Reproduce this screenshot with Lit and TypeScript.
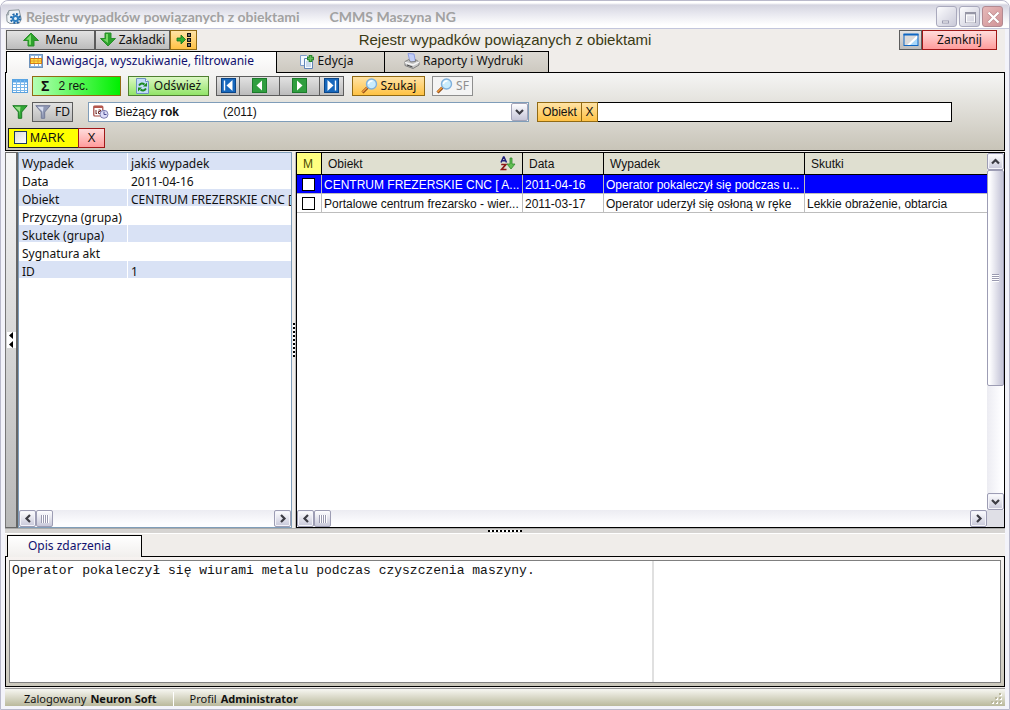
import { LitElement, html, css, svg, nothing } from "lit";
import { customElement, property, state } from "lit/decorators.js";
import { classMap } from "lit/directives/class-map.js";

const icon = (w: number, h: number, body: unknown) =>
  html`<svg width=${w} height=${h} viewBox="0 0 ${w} ${h}" aria-hidden="true">${body}</svg>`;

const icons = {
  app: icon(16, 16, svg`
    <path d="M3 1.500L13 .8l2.300 9.400-2 4L4 14.500 1 12.500.7 6z" fill="#eef3f6" stroke="#8b959b"/>
    <path d="M3 1.500L2.500 6 .7 6z" fill="#c3cbd0" stroke="#8b959b" stroke-width=".7"/>
    <circle cx="9.500" cy="9.500" r="3.600" fill="#2e7fc0"/>
    <circle cx="9.500" cy="9.500" r="4.500" fill="none" stroke="#1c66a8" stroke-width="2" stroke-dasharray="2 1.530"/>
    <circle cx="9.500" cy="9.500" r="1.500" fill="#e8f4fb"/>`),
  up: icon(16, 15, svg`
    <path d="M8 1L15.500 8.500H11V14H5V8.500H.5z" fill="#2da32d" stroke="#2a8f2a"/>
    <path d="M8 2.500L3 7.800h3v5h2z" fill="#7fdc6f"/>`),
  down: icon(16, 15, svg`
    <path d="M8 14L.5 6.500H5V1h6v5.500h4.500z" fill="#2da32d" stroke="#2a8f2a"/>
    <path d="M6 2h2v9L3 7.300h3z" fill="#7ad768"/>`),
  dock: icon(16, 15, svg`
    <path d="M1 6h4V3l4.500 4.500L5 12V9H1z" fill="#2fae2f" stroke="#12701a" stroke-width=".8"/>
    <g fill="#777" stroke="#111"><rect x="11.500" y="1.500" width="3" height="3"/><rect x="11.500" y="6.500" width="3" height="3"/><rect x="11.500" y="11.500" width="3" height="3"/></g>`),
  screen: icon(16, 14, svg`
    <path d="M1 1.500h14L4 13H1z" fill="#dadada"/><path d="M15 1.500V13H3z" fill="#fff"/><path d="M15 4.500V13H6z" fill="#a9d8fa"/>
    <rect x="1" y="1.500" width="14" height="11" fill="none" stroke="#0d67c4"/><path d="M.5 1.500h15" stroke="#0d67c4" stroke-width="2"/>`),
  form: icon(14, 14, svg`
    <rect x=".5" y=".5" width="13" height="13" fill="#8fb4dc" stroke="#6e92bb"/>
    <path d="M2 2h3v2H2zM6 2h3v2H6zM10 2h2v2h-2zM2 10h3v2H2zM6 10h3v2H6zM10 10h2v2h-2z" fill="#fff"/>
    <rect x="1.500" y="4.500" width="11" height="5" fill="#ffe23a" stroke="#d27b1c"/><path d="M5 5v4M9 5v4M2 7h10" stroke="#e79a32"/>`),
  edit: icon(15, 15, svg`
    <path d="M.5 1.500h6l2 2v8h-8z" fill="#f3f8ff" stroke="#7d9cc9"/>
    <path d="M4.500 4.500h6l2 2v8h-8z" fill="#f7fbff" stroke="#6184b8"/>
    <path d="M6 8h5M6 10h5M6 12h5" stroke="#9fb9dc"/>
    <path d="M10.500 1v7M7 4.500h7" stroke="#26862a" stroke-width="3.600"/><path d="M10.500 2v5M8 4.500h5" stroke="#67bb5b" stroke-width="1.400"/>`),
  printer: icon(16, 16, svg`
    <path d="M4 .5l6 .5 1.500 8H6z" fill="#c3cff7" stroke="#8d9de0"/>
    <path d="M1 8.500l4-2 1.500 2.500 5-.5V6.500L15 9v3l-6 3.500-8-3z" fill="#c8c8c8" stroke="#7f7f7f"/>
    <path d="M1 9.500l8 2.500 6-3" fill="none" stroke="#f5f5f5" stroke-width="1.400"/><path d="M3 12l5.500 2" stroke="#444"/>`),
  grid: icon(16, 14, svg`
    <rect x=".5" y=".5" width="15" height="13" fill="#fff" stroke="#5aa1dd"/><path d="M1 2h14" stroke="#5aa6e8" stroke-width="3"/>
    <path d="M4.500 1v12M8.500 1v12M12.500 1v12M1 5.500h14M1 8.500h14M1 11.500h14" stroke="#79b6ea"/>`),
  refresh: icon(13, 16, svg`
    <path d="M.5.500h9l3 3v12H.5z" fill="#c3dcf8" stroke="#6f93c2"/><path d="M9.500.500v3h3" fill="#fff" stroke="#6f93c2"/>
    <path d="M3 7.500Q5.500 4 8.500 6.500" fill="none" stroke="#1b8a22" stroke-width="2"/><path d="M7 8.500h4V4.500z" fill="#1b8a22"/>
    <path d="M10 10.500Q7.500 14 4.500 11.500" fill="none" stroke="#1b8a22" stroke-width="2"/><path d="M6 9.500H2v4z" fill="#1b8a22"/>`),
  first: icon(15, 15, svg`<rect x=".5" y=".5" width="14" height="14" fill="#1768bd" stroke="#0b4587"/><path d="M3.500 2.500v10" stroke="#fff" stroke-width="1.400"/><path d="M11.500 2v11L5.500 7.500z" fill="#fff"/>`),
  prev: icon(15, 15, svg`<rect x=".5" y=".5" width="14" height="14" fill="#2f9e3f" stroke="#1c7a2c"/><path d="M10 2.500v10L4.500 7.500z" fill="#fff"/>`),
  next: icon(15, 15, svg`<rect x=".5" y=".5" width="14" height="14" fill="#2f9e3f" stroke="#1c7a2c"/><path d="M5 2.500v10l5.500-5z" fill="#fff"/>`),
  last: icon(15, 15, svg`<rect x=".5" y=".5" width="14" height="14" fill="#1768bd" stroke="#0b4587"/><path d="M11.500 2.500v10" stroke="#fff" stroke-width="1.400"/><path d="M3.500 2v11l6-5.500z" fill="#fff"/>`),
  lens: icon(17, 16, svg`
    <path d="M1.500 14.500L6.500 9.500" stroke="#8c4a18" stroke-width="3"/><path d="M1.500 14L6 9.500" stroke="#f09a3a" stroke-width="1.600"/>
    <circle cx="10.500" cy="6" r="5" fill="#c9ecfd" stroke="#7fb0dc" stroke-width="1.400"/><path d="M7.500 6a3.200 3.200 0 0 1 4-3" fill="none" stroke="#fff" stroke-width="1.500"/>`),
  funnel: icon(16, 14, svg`
    <path d="M.8.700h14.400L9.700 7v6.300H6.300V7z" fill="#32a836" stroke="#1d7a24"/><path d="M2.500 1.700h6L7.500 11V6.500z" fill="#9be08d"/>`),
  funnelGray: icon(16, 14, svg`
    <path d="M.8.700h14.400L9.700 7v6.300H6.300V7z" fill="#8f98b4" stroke="#747c98"/><path d="M2.500 1.700h6L7.500 11V6.500z" fill="#d8def0"/>`),
  calendar: icon(16, 14, svg`
    <rect x=".8" y="1" width="9" height="10" rx="1" fill="#fff" stroke="#a1443d" stroke-width="1.200"/><path d="M1 2h9" stroke="#b5564d" stroke-width="2"/>
    <path d="M3 5v3M2.500 8.500h1.500M5.500 5h2v1.500h-2v2h2" fill="none" stroke="#702b27"/>
    <circle cx="11" cy="9.300" r="4" fill="#dcdcf8" stroke="#8080b0"/><path d="M11 6.500v3h2.500" fill="none" stroke="#4c4c90"/>`),
  sort: icon(16, 15, svg`
    <path d="M1 6.500L3.500 1h.5l2.500 5.500M2 4.700h3.500" fill="none" stroke="#20207a" stroke-width="1.500"/>
    <path d="M1.200 8.500h4.600L1.500 13.500h5" fill="none" stroke="#8c1818" stroke-width="1.700"/>
    <path d="M10 2h2v6h3l-4 5-4-5h3z" fill="#62bf52" stroke="#2f8b2c" stroke-width=".8"/>`),
  minimize: icon(21, 21, svg`<rect x="5.500" y="14" width="6" height="2" fill="#fff" stroke="#9c9cb0"/>`),
  maximize: icon(21, 21, svg`<rect x="5.500" y="5.500" width="10" height="10" fill="none" stroke="#9696a6"/><path d="M5 6.500h11" stroke="#9696a6" stroke-width="2"/><rect x="6.500" y="8" width="8" height="7" fill="none" stroke="#fff"/>`),
  close: icon(21, 21, svg`<path d="M5.500 5.500l10 10M15.500 5.500l-10 10" stroke="#b98488" stroke-width="3.600"/><path d="M5.500 5.500l10 10M15.500 5.500l-10 10" stroke="#fff" stroke-width="2.400"/>`),
  grip: icon(11, 11, svg`
    <path d="M9 1h2v2H9zM5 5h2v2H5zM9 5h2v2H9zM1 9h2v2H1zM5 9h2v2H5zM9 9h2v2H9z" fill="#fff"/>
    <path d="M8 0h2v2H8zM4 4h2v2H4zM8 4h2v2H8zM0 8h2v2H0zM4 8h2v2H4zM8 8h2v2H8z" fill="#b9b79c"/>`),
  collapse: icon(9, 16, svg`<path d="M6 0v7L2 3.500zM6 9v7L2 12.500z" fill="#000"/>`),
};

const chevrons: Record<string, string> = {
  left: "M7 1L3.500 4.500 7 8",
  right: "M3 1l3.500 3.500L3 8",
  up: "M1 6.500L4.500 3 8 6.500",
  down: "M1 3l3.500 3.500L8 3",
};
const chevron = (dir: string) =>
  icon(9, 9, svg`<path d=${chevrons[dir]} fill="none" stroke="#3c3c44" stroke-width="2.200"/>`);

@customElement("scroll-bar")
class ScrollBar extends LitElement {
  @property({ type: Boolean, reflect: true }) vertical = false;

  static styles = css`
    :host { display: flex; height: 17px; background: linear-gradient(#ececf2, #fdfdff 80%); }
    :host([vertical]) { flex-direction: column; width: 17px; height: auto; background: linear-gradient(90deg, #ececf2, #fdfdff 80%); }
    button {
      flex: none; display: grid; place-items: center; width: 17px; height: 17px; padding: 0;
      border: 1px solid #9d9db4; border-radius: 2px;
      background: linear-gradient(#fefeff, #c8c8da); box-shadow: inset 0 0 0 1px #f4f4fa;
    }
    .track { flex: 1; min-width: 0; min-height: 0; display: flex; }
    .thumb {
      width: 17px; height: 17px; box-sizing: border-box; display: grid; place-items: center;
      border: 1px solid #9d9db4; border-radius: 2px; background: linear-gradient(#fefeff, #c8c8da);
    }
    :host([vertical]) .thumb { height: 67%; background: linear-gradient(90deg, #fefeff 10%, #c8c8da 90%); }
    .ridges { width: 8px; height: 8px; background: repeating-linear-gradient(90deg, #9a9ab0 0 1px, #fff 1px 2px); }
    :host([vertical]) .ridges { width: 7px; background: repeating-linear-gradient(#9a9ab0 0 1px, #fff 1px 2px); }
  `;

  render() {
    const [back, forth] = this.vertical ? ["up", "down"] : ["left", "right"];
    return html`
      <button aria-label="Scroll ${back}">${chevron(back)}</button>
      <div class="track"><div class="thumb"><div class="ridges"></div></div></div>
      <button aria-label="Scroll ${forth}">${chevron(forth)}</button>`;
  }
}

const details: [string, string][] = [
  ["Wypadek", "jakiś wypadek"],
  ["Data", "2011-04-16"],
  ["Obiekt", "CENTRUM FREZERSKIE CNC ["],
  ["Przyczyna (grupa)", ""],
  ["Skutek (grupa)", ""],
  ["Sygnatura akt", ""],
  ["ID", "1"],
];

const records = [
  ["CENTRUM FREZERSKIE CNC [ A...", "2011-04-16", "Operator pokaleczył się podczas u...", ""],
  ["Portalowe centrum frezarsko - wier...", "2011-03-17", "Operator uderzył się osłoną w ręke", "Lekkie obrażenie, obtarcia"],
];

@customElement("app-root")
class AppRoot extends LitElement {
  @state() private selected = 0;

  static styles = css`
    :host {
      display: flex; flex-direction: column; box-sizing: border-box; height: 100vh; min-height: 480px;
      padding: 0 4px 3px; border: 1px solid #b9b9cb; border-radius: 8px 8px 0 0;
      background: #f3f3fa; color: #111;
      font: 12px/14px "Noto Sans", sans-serif;
    }
    * { box-sizing: border-box; }
    svg { display: block; flex: none; }
    button, input, select, textarea { font: inherit; color: inherit; margin: 0; border-radius: 0; }
    .arial { font-family: "Liberation Sans", sans-serif; }

    .titlebar {
      display: flex; align-items: center; height: 28px; margin: 0 -4px; padding: 4px 6px 0 5px;
      border-bottom: 1px solid #c3c6dc; border-radius: 8px 8px 0 0;
      background: linear-gradient(#fff 0 2px, #d4d4e0 4px, #e6e6ee 12px, #fff 24px);
      font: bold 14px/16px Lato, sans-serif; color: #a2a2a2;
    }
    .titlebar h1 { font: inherit; margin: 0 0 0 4px; }
    .titlebar .product { margin-left: 30px; flex: 1; }
    .sys { display: flex; gap: 2px; }
    .sys button {
      width: 21px; height: 21px; padding: 0; border: 1px solid #a9a9bd; border-radius: 3px;
      background: linear-gradient(135deg, #fcfcfe, #c9c9d8); display: grid; place-items: center;
    }
    .sys .quit { background: linear-gradient(135deg, #e6b9b9, #d09296); border-color: #b28a92; }

    .client { flex: 1; min-height: 0; display: flex; flex-direction: column; background: #f0edea; }

    .btn {
      display: inline-flex; align-items: center; justify-content: center; gap: 6px; height: 20px; padding: 0 8px;
      border: 1px solid #5c5c5c; background: linear-gradient(#e2e2e2, #bcbcbc); white-space: nowrap;
    }
    .amber { border-color: #916a14; background: linear-gradient(#ffe3a6, #ffc244); }
    .red { border-color: #a01818; background: linear-gradient(#ffdcdc, #ff9c9c); }
    .green { border-color: #4f7f30; background: linear-gradient(#dcf8c4, #92e468); }
    .btn:disabled { color: #8e8e8e; border-color: #8e8e8e; background: #f4f4f4; }
    .square { width: 23px; padding: 0; }
    .w27 { width: 27px; padding: 0; }

    .menubar { display: grid; grid-template-columns: 1fr auto 1fr; align-items: center; height: 22px; padding: 0 1px 1px; }
    .menubar h2 { margin: 0; font: 15px/20px "Liberation Sans", sans-serif; color: #3a3a14; }
    .group { display: flex; }
    .group.end { justify-content: flex-end; padding-right: 7px; }
    .menu { width: 89px; }
    .bookmarks { width: 75px; gap: 3px; padding: 0; }
    .exit { width: 75px; }

    .tabs { display: flex; height: 21px; padding-left: 1px; }
    .tab {
      display: flex; align-items: center; justify-content: center; gap: 3px; padding: 0 0 2px;
      border: 1px solid #000; border-bottom: 0; background: linear-gradient(#dcd9d3, #cdc9c0);
    }
    .tab + .tab { border-left: 0; }
    .tab.active { height: 22px; padding-bottom: 4px; z-index: 1; background: linear-gradient(#fff, #f4f3f2); color: #10106e; }
    .nav { width: 271px; }
    .editing { width: 108px; padding-right: 8px; }
    .reports { width: 164px; padding-right: 6px; }

    .filters {
      display: flex; flex-direction: column; gap: 5px; height: 79px; padding: 2px 8px 0 2px;
      border: 1px solid #000; background: linear-gradient(#f5f5f4, #c8c4b8);
    }
    .row { display: flex; align-items: center; height: 21px; }
    .lead { width: 24px; padding-left: 4px; }
    .sum { width: 89px; justify-content: flex-start; gap: 9px; border-color: #916a14; background: linear-gradient(90deg, #b4ffb4, #00f000); }
    .sum b { font-size: 14px; }
    .refresh { width: 81px; margin: 0 7px; gap: 5px; padding: 0; }
    .step { width: 24px; padding: 0; }
    .step.wide { width: 40px; }
    .step + .step { border-left-width: 0; }
    .search { width: 73px; margin: 0 7px 0 8px; gap: 3px; padding: 0; }
    .sf { width: 41px; gap: 3px; padding: 0; }
    .fd { width: 41px; margin-right: 15px; gap: 4px; padding: 0; }
    .period { display: grid; align-items: center; width: 441px; height: 20px; margin-right: 8px; border: 1px solid #7f9db9; background: #fff; }
    .period > * { grid-area: 1 / 1; }
    .period select { width: 100%; height: 18px; border: 0; background: none; appearance: none; color: transparent; }
    .period option { color: #111; }
    .shown { display: flex; align-items: center; padding-left: 4px; pointer-events: none; }
    .shown .when { width: 108px; margin-left: 6px; }
    .shown .year { flex: 1; }
    .drop { display: grid; place-items: center; width: 17px; height: 18px; border: 1px solid #a4a4b8; border-radius: 2px; background: linear-gradient(#fdfdff, #c6c6d8); }
    .object { width: 45px; padding: 0; }
    .object-clear { width: 16px; padding: 0; border-left: 0; }
    .object-text { flex: 0 1 354px; min-width: 60px; height: 20px; padding: 0 4px; border: 1px solid #000; border-left: 0; background: #fff; }
    .mark { width: 70px; justify-content: flex-start; gap: 3px; padding: 0 0 0 5px; border-color: #222; border-right: 0; background: #ff0; }
    input[type="checkbox"] { appearance: none; width: 13px; height: 13px; border: 1px solid #1c3a5c; background: #fff; }
    .mark input { background: linear-gradient(135deg, #dcdcd7, #fff); }

    .main { flex: 1; min-height: 0; display: flex; padding-top: 1px; border-bottom: 1px solid #aaa; }
    .collapser { width: 13px; display: grid; place-items: center; padding: 0; border: 1px solid #666; border-right-width: 2px; border-left-color: #777; background: linear-gradient(#f6f6f6, #b8b8b8); }
    .collapser svg { background: #fff; }
    .details { width: 274px; display: flex; flex-direction: column; border: 1px solid #7f9db9; background: #fff; }
    .fill { flex: 1; min-height: 0; overflow: hidden; }
    table { width: 100%; table-layout: fixed; border-collapse: separate; border-spacing: 0; }
    th, td { padding: 0; text-align: left; font-weight: normal; white-space: nowrap; overflow: hidden; }
    .details th, .details td { height: 18px; padding: 4px 0 0 3px; overflow: visible; }
    .details th { width: 109px; border-right: 1px solid #fff; }
    .details tr:nth-child(odd) { background: linear-gradient(#d9e2f5 17px, #fff 17px); }

    .vsplit { width: 4px; display: grid; place-items: center; border-right: 1px solid #bbb; }
    .vsplit i { width: 2px; height: 34px; background: repeating-linear-gradient(#000 0 2px, #fff 2px 4px); }
    .hsplit { height: 5px; display: grid; place-items: center; border-bottom: 1px solid #fff; background: #d6d4d2; }
    .hsplit i { width: 34px; height: 2px; background: repeating-linear-gradient(90deg, #000 0 2px, #fff 2px 4px); }

    .records { flex: 1; min-width: 0; display: grid; grid-template-columns: 1fr 17px; grid-template-rows: 1fr 17px; border: 1px solid #000; background: #fff; font-family: "Liberation Sans", sans-serif; }
    .records .view { overflow: hidden; }
    .records .corner { background: #dfdfe6; }
    .records th { height: 22px; padding-left: 6px; border: solid #000; border-width: 0 1px 1px 0; background: #dfdfd0; }
    .records th:last-child, .records td:last-child { border-right: 0; }
    .records th:first-child { background: #ffff80; color: #4c4c00; }
    .records td { height: 19px; padding: 1px 0 0 2px; border: solid #bdbdbd; border-width: 0 1px 1px 0; }
    .records td:first-child { padding: 0 0 0 5px; }
    .records td input { display: block; border-color: #000; }
    .records tr.selected td { background: #00f; color: #fff; }
    .mcol { width: 25px; }
    .ocol { width: 201px; }
    .dcol { width: 81px; }
    .wcol { width: 201px; }
    .sorted { display: flex; justify-content: space-between; align-items: center; padding-right: 6px; }

    .notes-tabs { height: 22px; padding: 1px 0 0 2px; display: flex; }
    .notes-tabs .tab { width: 135px; padding: 0 10px 2px 0; background: linear-gradient(#fff, #f1efed); }
    .notes { height: 131px; display: flex; padding: 3px; border: 1px solid #000; background: linear-gradient(#f6f2f0, #cbc8bc); }
    .paper { flex: 1; display: flex; border: 1px solid #808080; background: #fff; }
    textarea { width: 65%; padding: 2px 2px; border: 0; border-right: 2px solid #e0e0e0; outline: 0; resize: none; background: #fff; font: 13px/16px "Liberation Mono", monospace; }

    .status { display: flex; align-items: center; height: 18px; margin-top: 1px; padding: 2px 3px 0 19px; border-top: 1px solid #999; background: linear-gradient(#f7f7f2, #bab99c); font-size: 11px; }
    .status b { margin-left: 4px; }
    .status .cell { padding-right: 16px; margin-right: 16px; border-right: 1px solid #fff; }
    .status .rest { flex: 1; }
  `;

  private scroller(vertical = false) {
    return html`<scroll-bar ?vertical=${vertical}></scroll-bar>`;
  }

  private recordRow(cells: string[], i: number) {
    return html`
      <tr class=${classMap({ selected: i === this.selected })} @click=${() => (this.selected = i)}>
        <td><input type="checkbox" aria-label="Mark ${cells[0]}" /></td>
        ${cells.map((c) => html`<td>${c || nothing}</td>`)}
      </tr>`;
  }

  render() {
    return html`
      <header class="titlebar">
        ${icons.app}
        <h1>Rejestr wypadków powiązanych z obiektami</h1>
        <span class="product">CMMS Maszyna NG</span>
        <div class="sys">
          <button aria-label="Minimize">${icons.minimize}</button>
          <button aria-label="Maximize">${icons.maximize}</button>
          <button class="quit" aria-label="Close">${icons.close}</button>
        </div>
      </header>
      <div class="client">
        <div class="menubar">
          <div class="group">
            <button class="btn menu">${icons.up}Menu</button>
            <button class="btn bookmarks">${icons.down}Zakładki</button>
            <button class="btn amber w27" aria-label="Dock">${icons.dock}</button>
          </div>
          <h2>Rejestr wypadków powiązanych z obiektami</h2>
          <div class="group end">
            <button class="btn square" aria-label="Window">${icons.screen}</button>
            <button class="btn red exit">Zamknij</button>
          </div>
        </div>
        <nav class="tabs">
          <button class="tab nav active">${icons.form}Nawigacja, wyszukiwanie, filtrowanie</button>
          <button class="tab editing">${icons.edit}Edycja</button>
          <button class="tab reports">${icons.printer}Raporty i Wydruki</button>
        </nav>
        <section class="filters">
          <div class="row">
            <span class="lead">${icons.grid}</span>
            <button class="btn sum arial"><b>Σ</b>2 rec.</button>
            <button class="btn green refresh">${icons.refresh}Odśwież</button>
            <button class="btn step" aria-label="First">${icons.first}</button>
            <button class="btn step wide" aria-label="Previous">${icons.prev}</button>
            <button class="btn step wide" aria-label="Next">${icons.next}</button>
            <button class="btn step" aria-label="Last">${icons.last}</button>
            <button class="btn amber search">${icons.lens}Szukaj</button>
            <button class="btn sf" disabled>${icons.lens}SF</button>
          </div>
          <div class="row">
            <span class="lead">${icons.funnel}</span>
            <button class="btn fd">${icons.funnelGray}FD</button>
            <div class="period arial">
              <select aria-label="Okres"><option>Bieżący rok (2011)</option></select>
              <div class="shown" aria-hidden="true">
                ${icons.calendar}<span class="when">Bieżący <b>rok</b></span><span class="year">(2011)</span>
                <span class="drop">${chevron("down")}</span>
              </div>
            </div>
            <label class="btn amber object arial" for="object">Obiekt</label>
            <button class="btn amber object-clear arial">X</button>
            <input class="object-text" id="object" type="text" />
          </div>
          <div class="row">
            <label class="btn mark arial"><input type="checkbox" />MARK</label>
            <button class="btn red w27 arial">X</button>
          </div>
        </section>
        <div class="main">
          <button class="collapser" aria-label="Collapse">${icons.collapse}</button>
          <section class="details">
            <div class="fill">
              <table>
                ${details.map(([k, v]) => html`<tr><th scope="row">${k}</th><td>${v || nothing}</td></tr>`)}
              </table>
            </div>
            ${this.scroller()}
          </section>
          <div class="vsplit"><i></i></div>
          <section class="records">
            <div class="view">
              <table>
                <thead>
                  <tr>
                    <th class="mcol">M</th>
                    <th class="ocol"><span class="sorted">Obiekt${icons.sort}</span></th>
                    <th class="dcol">Data</th>
                    <th class="wcol">Wypadek</th>
                    <th>Skutki</th>
                  </tr>
                </thead>
                <tbody>${records.map((r, i) => this.recordRow(r, i))}</tbody>
              </table>
            </div>
            ${this.scroller(true)}
            ${this.scroller()}
            <div class="corner"></div>
          </section>
        </div>
        <div class="hsplit"><i></i></div>
        <nav class="notes-tabs"><button class="tab active">Opis zdarzenia</button></nav>
        <section class="notes">
          <div class="paper">
            <textarea aria-label="Opis zdarzenia" .value=${"Operator pokaleczył się wiurami metalu podczas czyszczenia maszyny."}></textarea>
          </div>
        </section>
        <footer class="status">
          <span class="cell">Zalogowany<b>Neuron Soft</b></span>
          <span class="rest">Profil<b>Administrator</b></span>
          ${icons.grip}
        </footer>
      </div>`;
  }
}
